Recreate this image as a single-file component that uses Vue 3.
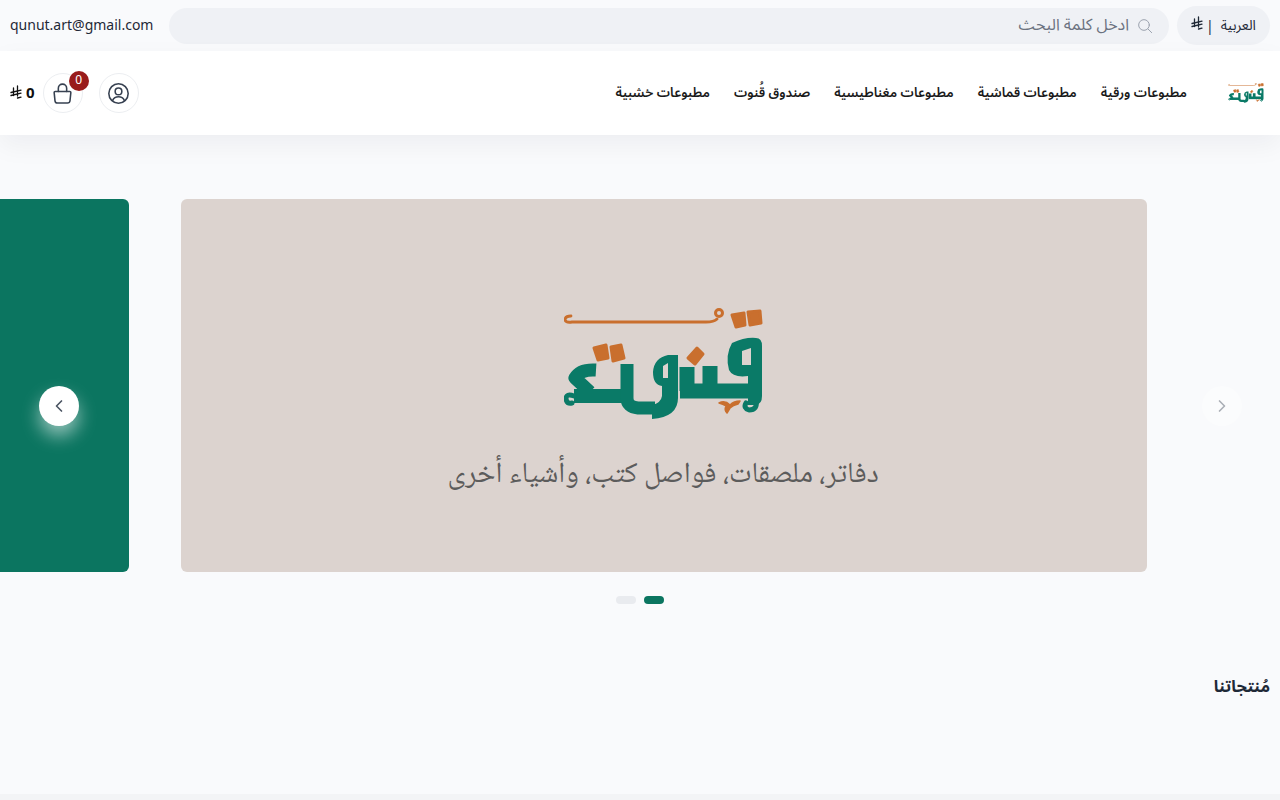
<template>
  <div class="page" dir="rtl">
    <div class="topbar">
      <button class="lang">
        <span>العربية</span>
        <span class="lang__sep">|</span>
        <svg class="riyal riyal--top" viewBox="0 0 12 14"><use href="#riyal-mark" /></svg>
      </button>
      <div class="search">
        <svg class="search__icon" viewBox="0 0 24 24" fill="none" stroke="currentColor" stroke-width="1.500" stroke-linecap="round">
          <circle cx="10.500" cy="10.500" r="8" />
          <path d="M16.500 16.500l5.500 5.500" />
        </svg>
        <span>ادخل كلمة البحث</span>
      </div>
      <span class="email" dir="ltr">qunut.art@gmail.com</span>
    </div>

    <header class="header">
      <svg class="hidden-defs" width="0" height="0">
        <defs>
          <g id="riyal-mark" fill="none" stroke="currentColor" stroke-width="1.300" stroke-linecap="round">
            <path d="M3.500 3v7.500M7.500 1v10" />
            <path d="M1 7.500l10-2.400M1 10.500l10-2.400M7.500 13l3.500-.9" />
          </g>
          <g id="logo-art">
            <g fill="none" stroke="#0a7a67" stroke-linejoin="round">
              <path stroke-width="13" d="M596 370Q580 369 575 378L590 392" />
              <path stroke-width="14" d="M574 396H628" />
              <path stroke-width="5" stroke-linecap="round" d="M574 396Q566 393 566 399Q567 404 572 403" />
              <path stroke-width="13" d="M627 364V398Q627 407 638 408H655" />
              <path stroke-width="15" d="M680 391H750" />
              <path stroke-width="15" d="M687 367V391M710 366V390" />
              <path stroke-width="5" stroke-linecap="round" d="M756 400Q758 410 749 410Q743 408 746 403" />
            </g>
            <path fill="#0a7a67" fill-rule="evenodd" d="M653 372Q654 358 668 355H678V398Q678 417 652 419V405Q661 403 662 396V386Q653 385 653 372ZM663 366L668 363V378H663Z" />
            <path fill="#0a7a67" fill-rule="evenodd" d="M732 343Q745 337 756 338Q762 338 762 346V396Q762 404 756 405H748V376Q733 378 729 370Q725 355 732 343ZM742 351L751 348V365H742Z" />
            <g fill="#c96f2e" stroke="#c96f2e" stroke-width="3" stroke-linejoin="round">
              <path d="M594 348L606 345L608 358L598 360ZM611 347L621 345L624 358L613 361ZM688 358L697 348L703 354L695 364ZM732 315L744 313L745 325L736 327ZM748 312L760 311L761 323L750 325Z" />
              <path stroke-width="1.500" d="M719 403Q725 400 730 405Q734 401 740 401L738 404Q733 405 730 408L727 413Q724 410 726 406Q723 404 719 403Z" />
            </g>
            <path fill="none" stroke="#c96f2e" stroke-width="2.800" stroke-linecap="round" d="M571 316Q565 316 565 320Q566 323 572 322H706Q714 322 717 319" />
            <circle cx="719" cy="313" r="3.500" fill="none" stroke="#c96f2e" stroke-width="3" />
          </g>
        </defs>
      </svg>

      <div class="brand">
        <svg class="brand__logo" viewBox="564 308 200 112"><use href="#logo-art" /></svg>
      </div>
      <nav class="nav">
        <a v-for="item in navItems" :key="item">{{ item }}</a>
      </nav>
      <div class="actions">
        <button class="circle">
          <svg viewBox="0 0 24 24" fill="none" stroke="#374151" stroke-width="1.500" stroke-linecap="round">
            <circle cx="12" cy="12" r="9.300" />
            <circle cx="12" cy="10" r="3.200" />
            <path d="M6.400 18.600c1-2.300 3-3.400 5.600-3.400s4.600 1.100 5.600 3.400" />
          </svg>
        </button>
        <button class="circle circle--cart">
          <svg viewBox="0 0 24 24" fill="none" stroke="#374151" stroke-width="1.500" stroke-linecap="round" stroke-linejoin="round">
            <path d="M8 10V7a4 4 0 018 0v3" />
            <path d="M5 10h14a1 1 0 011 1.100l-.8 7.900a2.500 2.500 0 01-2.500 2.200H7.300a2.500 2.500 0 01-2.500-2.200L4 11.100A1 1 0 015 10z" />
          </svg>
          <span class="badge">0</span>
        </button>
        <span class="total">
          <b>0</b>
          <svg class="riyal" viewBox="0 0 12 14"><use href="#riyal-mark" /></svg>
        </span>
      </div>
    </header>

    <section class="carousel">
      <div class="track">
        <div class="slide slide--beige">
          <svg class="slide__logo" viewBox="564 308 200 112"><use href="#logo-art" /></svg>
          <p class="slide__text">دفاتر، ملصقات، فواصل كتب، وأشياء أخرى</p>
        </div>
        <div class="slide slide--green"></div>
      </div>
      <button class="arrow arrow--next">
        <svg viewBox="0 0 24 24" fill="none" stroke="currentColor" stroke-width="2" stroke-linecap="round" stroke-linejoin="round"><path d="M9 6l6 6-6 6" /></svg>
      </button>
      <button class="arrow arrow--prev">
        <svg viewBox="0 0 24 24" fill="none" stroke="currentColor" stroke-width="2" stroke-linecap="round" stroke-linejoin="round"><path d="M15 6l-6 6 6 6" /></svg>
      </button>
    </section>

    <div class="dots">
      <span class="dot dot--on"></span>
      <span class="dot"></span>
    </div>

    <h2 class="title">مُنتجاتنا</h2>
    <div class="foot"></div>
  </div>
</template>

<script setup>
const navItems = [
  'مطبوعات ورقية',
  'مطبوعات قماشية',
  'مطبوعات مغناطيسية',
  'صندوق قُنوت',
  'مطبوعات خشبية',
]
</script>

<style>
html, body { background: #f9fafc; }
</style>

<style scoped>
.page {
  height: 800px;
  overflow: hidden;
  background: #f9fafc;
  color: #1f2937;
  font-family: "Noto Sans", "Noto Sans Arabic", "DejaVu Sans", sans-serif;
  display: flex;
  flex-direction: column;
}

button {
  font: inherit;
  color: inherit;
  border: 0;
  padding: 0;
  cursor: pointer;
}

.topbar {
  height: 51px;
  flex: none;
  display: flex;
  align-items: center;
  gap: 8px;
  padding: 0 10px;
  box-sizing: border-box;
}

.lang {
  width: 93px;
  height: 39px;
  border-radius: 20px;
  background: #eff1f5;
  display: flex;
  align-items: center;
  justify-content: center;
  gap: 3px;
  font-size: 14px;
  padding-bottom: 1px;
  box-sizing: border-box;
}

.lang__sep { padding: 0 4px 0 0; }

.riyal--top { margin-bottom: 4px; }

.search {
  flex: 1;
  height: 36px;
  border-radius: 18px;
  background: #eff1f5;
  display: flex;
  align-items: center;
  gap: 8px;
  padding: 0 16px 2px;
  box-sizing: border-box;
  color: #6b7280;
  font-size: 16px;
}

.search__icon {
  width: 16px;
  height: 16px;
  color: #9ca3af;
  margin-top: 2px;
}

.email {
  font-size: 14px;
  margin: 0 8px 2px 0;
}

.header {
  height: 84px;
  flex: none;
  background: #fff;
  display: flex;
  align-items: center;
  padding: 0 10px;
  box-shadow: 0 10px 25px rgba(17, 24, 39, 0.05);
  position: relative;
}

.hidden-defs { position: absolute; }

.brand {
  width: 36px;
  margin-right: 6px;
  display: flex;
}

.brand__logo {
  width: 36px;
  height: 20px;
}

.nav {
  display: flex;
  gap: 24px;
  margin-right: 41px;
  padding-bottom: 1px;
  font-size: 13.200px;
  font-weight: 600;
  color: #1a1a1a;
}

.actions {
  margin-right: auto;
  display: flex;
  align-items: center;
  gap: 16px;
}

.circle {
  width: 40px;
  height: 40px;
  border-radius: 50%;
  background: #fff;
  border: 1px solid #eceef1;
  display: flex;
  align-items: center;
  justify-content: center;
  position: relative;
}

.circle svg {
  width: 25px;
  height: 25px;
}

.badge {
  position: absolute;
  top: -3px;
  left: 25px;
  width: 20px;
  height: 20px;
  border-radius: 50%;
  background: #991b1b;
  color: #fff;
  font-size: 12px;
  line-height: 18px;
  text-align: center;
}

.total {
  display: flex;
  align-items: center;
  gap: 4px;
  margin-right: -8px;
  padding-bottom: 2px;
  font-size: 15px;
  color: #111;
}

.riyal {
  width: 12px;
  height: 14px;
  display: block;
}

.carousel {
  position: relative;
  margin-top: 64px;
  flex: none;
}

.track {
  display: flex;
  gap: 52px;
  padding-right: 133px;
  overflow: hidden;
}

.slide {
  width: 966px;
  height: 373px;
  flex: none;
  border-radius: 6px;
  box-sizing: border-box;
}

.slide--beige {
  background: #dcd3cf;
  display: flex;
  flex-direction: column;
  align-items: center;
  padding-top: 109px;
}

.slide--green { background: #0b7560; }

.slide__logo {
  width: 200px;
  height: 112px;
}

.slide__text {
  margin: 33px 2px 0 0;
  font-family: "Noto Naskh Arabic", serif;
  font-size: 29px;
  line-height: 46px;
  color: #5c5c5c;
}

.arrow {
  position: absolute;
  top: 187px;
  width: 40px;
  height: 40px;
  border-radius: 50%;
  background: #fff;
  display: flex;
  align-items: center;
  justify-content: center;
  color: #4b5563;
}

.arrow svg {
  width: 20px;
  height: 20px;
}

.arrow--next {
  right: 38.500px;
  opacity: 0.45;
  box-shadow: 0 10px 15px rgba(255, 255, 255, 0.5);
}

.arrow--prev {
  left: 38.500px;
  box-shadow: 0 10px 18px rgba(255, 255, 255, 0.55);
}

.dots {
  display: flex;
  justify-content: center;
  gap: 8px;
  margin-top: 24px;
}

.dot {
  width: 20px;
  height: 8px;
  border-radius: 4px;
  background: #e9ebef;
}

.dot--on { background: #0b7560; }

.title {
  margin: 70px 10px 0 0;
  font-size: 16.500px;
  line-height: 24px;
  font-weight: 700;
  color: #1f2937;
}

.foot {
  margin-top: auto;
  height: 6px;
  background: #f3f4f6;
}
</style>
